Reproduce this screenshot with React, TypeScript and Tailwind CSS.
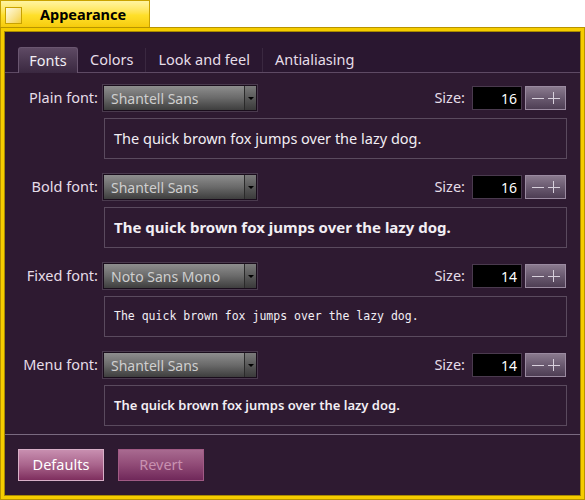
import React from 'react'

const sans = { fontFamily: '"Noto Sans", "Open Sans", sans-serif' }
const mono = { fontFamily: '"DejaVu Sans Mono", "Liberation Mono", monospace' }

const rows = [
  { label: 'Plain font:', font: 'Shantell Sans', size: 16, kind: 'plain' },
  { label: 'Bold font:', font: 'Shantell Sans', size: 16, kind: 'bold' },
  { label: 'Fixed font:', font: 'Noto Sans Mono', size: 14, kind: 'mono' },
  { label: 'Menu font:', font: 'Shantell Sans', size: 14, kind: 'menu' },
]

function FontRow({ label, font, size, kind }: { label: string; font: string; size: number; kind: string }) {
  const sample = 'The quick brown fox jumps over the lazy dog.'
  return (
    <div className="flex flex-col gap-[7px]">
      <div className="flex items-center h-[26px]">
        <span className="w-[98px] pr-[5px] text-right text-[14.5px] text-[#e6dde8]">{label}</span>
        <div className="flex h-[26px] w-[154px] border border-[#1a0d1c] shadow-[0_0_0_1px_#4a3a4e]">
          <div className="flex-1 flex items-center pl-[7px] text-[14px] text-[#cfcfcf] bg-gradient-to-b from-[#8e8e8e] via-[#6a6a6a] to-[#3e3e3e]">
            {font}
          </div>
          <div className="w-[12px] flex items-center justify-center border-l border-[#2a2a2a] bg-gradient-to-b from-[#7a7a7a] to-[#3a3a3a]">
            <div className="w-0 h-0 border-l-[3px] border-r-[3px] border-t-[3px] border-l-transparent border-r-transparent border-t-black" />
          </div>
        </div>
        <div className="flex-1" />
        <span className="text-[14.5px] text-[#e6dde8] mr-[7px]">Size:</span>
        <div className="w-[50px] h-[24px] bg-black border border-[#4a3a4e] flex items-center justify-end pr-[4px] text-[14px] text-white">
          {size}
        </div>
        <div className="ml-[3px] w-[41px] h-[24px] border border-[#9a8aa0] bg-gradient-to-b from-[#8a7a8e] via-[#6a5a70] to-[#4e3e54] flex items-center justify-center gap-[4px] text-[#e0d8e4]">
          <span className="block w-[12px] h-[1px] bg-[#d8d0dc]" />
          <span className="relative block w-[12px] h-[12px]">
            <span className="absolute left-0 top-[5.5px] w-[12px] h-[1px] bg-[#d8d0dc]" />
            <span className="absolute top-0 left-[5.5px] w-[1px] h-[12px] bg-[#d8d0dc]" />
          </span>
        </div>
        <div className="w-[14px]" />
      </div>
      <div className="ml-[99px] mr-[13px] h-[41px] border border-[#5a4a5e] flex items-center pl-[9px] text-[#f2eef4]">
        {kind === 'mono' ? (
          <span style={mono} className="text-[11.5px]">{sample}</span>
        ) : kind === 'bold' ? (
          <span className="font-bold text-[15px]">{sample}</span>
        ) : kind === 'menu' ? (
          <span className="font-semibold text-[13px]">{sample}</span>
        ) : (
          <span className="text-[14.5px]">{sample}</span>
        )}
      </div>
    </div>
  )
}

export default function App() {
  return (
    <div className="w-[585px] h-[500px] bg-white relative overflow-hidden" style={sans}>
      {/* title tab */}
      <div className="absolute left-0 top-0 w-[150px] h-[30px] border border-[#c9a200] bg-gradient-to-b from-[#fff4a0] via-[#ffe02a] to-[#f5c800] flex items-center">
        <div className="ml-[4px] w-[17px] h-[17px] border border-[#c9a200] bg-gradient-to-br from-[#fffbe0] to-[#f5d030]" />
        <span className="ml-[18px] text-[14.5px] font-bold text-black">Appearance</span>
      </div>
      {/* window */}
      <div className="absolute left-0 top-[27px] w-[585px] h-[473px] border border-[#b89400] bg-[#f5cc00] p-[3px]">
        <div className="w-full h-full border border-[#a88a00] bg-[#2e1a31] flex flex-col">
          {/* tab bar */}
          <div className="h-[16px] bg-[#2a1730]" />
          <div className="flex items-end h-[25px] border-b border-[#5e4a64] pl-[13px] bg-[#2a1730]">
            <div className="h-[26px] w-[60px] -mb-[1px] rounded-t-[3px] border border-[#6a5670] border-b-0 bg-gradient-to-b from-[#5e4a64] to-[#3a2840] flex items-center justify-center text-[14.5px] text-[#f2eef4]">
              Fonts
            </div>
            <div className="h-[24px] px-[12px] flex items-center text-[14.5px] text-[#e6dde8] border-r border-[#3a2840]">Colors</div>
            <div className="h-[24px] px-[12px] flex items-center text-[14.5px] text-[#e6dde8] border-r border-[#3a2840]">Look and feel</div>
            <div className="h-[24px] px-[12px] flex items-center text-[14.5px] text-[#e6dde8]">Antialiasing</div>
          </div>
          {/* rows */}
          <div className="flex flex-col gap-[15px] pt-[12px]">
            {rows.map((r) => (
              <FontRow key={r.label} {...r} />
            ))}
          </div>
          <div className="mt-[8px] border-t border-[#7a6a80]" />
          <div className="flex gap-[14px] pl-[13px] pt-[14px]">
            <div className="w-[86px] h-[32px] border border-[#d8b0c8] bg-gradient-to-b from-[#c88fb0] via-[#a9648c] to-[#7e2e5e] flex items-center justify-center text-[14.5px] text-white">
              Defaults
            </div>
            <div className="w-[86px] h-[32px] border border-[#a05a84] bg-gradient-to-b from-[#a86a90] via-[#904a76] to-[#70285a] flex items-center justify-center text-[14.5px] text-[#c890b0]">
              Revert
            </div>
          </div>
        </div>
      </div>
    </div>
  )
}
